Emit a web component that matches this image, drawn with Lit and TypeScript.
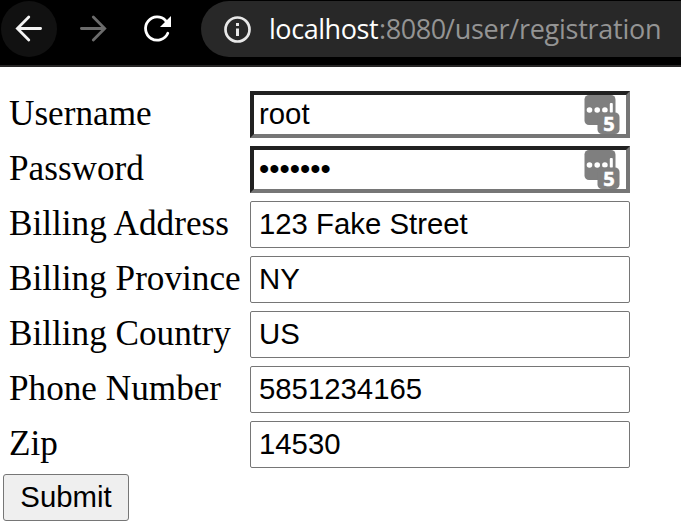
import { LitElement, html, css, svg, nothing } from "lit";
import { customElement } from "lit/decorators.js";
import { classMap } from "lit/directives/class-map.js";

interface Field {
  label: string;
  value: string;
  managed?: boolean;
}

const FIELDS: Field[] = [
  { label: "Username", value: "root", managed: true },
  { label: "Password", value: "•••••••", managed: true },
  { label: "Billing Address", value: "123 Fake Street" },
  { label: "Billing Province", value: "NY" },
  { label: "Billing Country", value: "US" },
  { label: "Phone Number", value: "5851234165" },
  { label: "Zip", value: "14530" },
];

@customElement("browser-bar")
export class BrowserBar extends LitElement {
  static styles = css`
    :host {
      display: flex;
      box-sizing: border-box;
      height: 67px;
      padding-top: 1px;
      background: #000;
      border-bottom: 2px solid #272626;
      overflow: hidden;
    }
    .nav {
      flex: none;
      display: flex;
      width: 201px;
      height: 56px;
      padding-left: 1px;
      box-sizing: border-box;
    }
    .btn {
      flex: none;
      width: 56px;
      height: 56px;
      margin-right: 8px;
      border-radius: 50%;
    }
    .active {
      background: #111;
    }
    svg {
      display: block;
      flex: none;
    }
    .omnibox {
      flex: 1;
      height: 56px;
      border-radius: 28px 0 0 28px;
      background: #282828;
      display: flex;
      align-items: center;
      white-space: nowrap;
      font: 27px/56px "Open Sans", "Noto Sans", sans-serif;
      color: #949494;
    }
    .info {
      margin: 0 16px 0 22px;
    }
    .host {
      color: #fff;
      width: 110px;
      letter-spacing: -0.45px;
    }
    .port {
      width: 66px;
      letter-spacing: -0.4px;
    }
    .path {
      letter-spacing: -0.25px;
    }
  `;

  render() {
    return html`
      <div class="nav">
        <div class="btn active">
          <svg width="56" height="56" fill="none" stroke="#f4f4f4" stroke-width="2.8" stroke-linecap="round">
            <path d="M39.6 27.5H17M27.8 16L16.4 27.5L27.8 39" />
          </svg>
        </div>
        <div class="btn">
          <svg width="56" height="56" fill="none" stroke="#6b6b6b" stroke-width="2.8" stroke-linecap="round">
            <path d="M16.4 27.5H39M28.3 16L39.7 27.5L28.3 39" />
          </svg>
        </div>
        <div class="btn">
          <svg width="56" height="56">
            <path d="M36.7 19.7A11.6 11.6 0 1 0 38.8 32.2" fill="none" stroke="#fff" stroke-width="2.8" stroke-linecap="round" />
            <path d="M42 15V26H31Z" fill="#fff" />
          </svg>
        </div>
      </div>
      <div class="omnibox">
        <svg class="info" width="30" height="30">
          <circle cx="14.5" cy="15.5" r="12" fill="none" stroke="#e8e8e8" stroke-width="2.7" />
          <path d="M13 9h3v3h-3zM13 14.5h3V22h-3z" fill="#e8e8e8" />
        </svg>
        <span class="host">localhost</span><span class="port">:8080</span><span class="path">/user/registration</span>
      </div>
    `;
  }
}

@customElement("app-root")
export class AppRoot extends LitElement {
  static styles = css`
    :host {
      display: block;
      height: 532px;
      background: #fff;
      overflow: hidden;
      color: #000;
    }
    .form {
      display: grid;
      grid-template-columns: 241px 380px;
      grid-auto-rows: 47px;
      row-gap: 8px;
      padding: 24px 0 0 9px;
    }
    .label {
      font: 35.2px/45px "Liberation Serif", serif;
      white-space: nowrap;
    }
    .field {
      position: relative;
      box-sizing: border-box;
      height: 47px;
      padding: 0 8px;
      border: 1px solid #767676;
      border-radius: 2px;
      font: 29.33px/43px "Liberation Sans", sans-serif;
      white-space: nowrap;
    }
    .managed {
      padding: 0 5px;
      border: 4px solid;
      border-color: #212121 #767676 #767676 #212121;
      border-radius: 0;
      line-height: 37px;
    }
    .badge {
      position: absolute;
      right: 6.5px;
      top: 0;
      overflow: visible;
    }
    .digit {
      font: 700 20px "Open Sans", sans-serif;
    }
    .submit {
      display: block;
      box-sizing: border-box;
      width: 126px;
      height: 47px;
      margin: 6px 0 0 3px;
      padding: 0 0 2px;
      border: 1px solid #767676;
      border-radius: 3px;
      background: #efefef;
      color: #000;
      font: 29.33px/43px "Liberation Sans", sans-serif;
    }
  `;

  private badge() {
    return html`<svg class="badge" width="36" height="39">
      ${svg`
        <rect x="0.5" y="0" width="31" height="30" rx="4.5" fill="#7f7f7f" />
        <circle cx="5.5" cy="15" r="2.8" fill="#fff" />
        <circle cx="13.2" cy="15" r="2.8" fill="#fff" />
        <circle cx="20.9" cy="15" r="2.8" fill="#fff" />
        <rect x="25.8" y="8" width="3" height="10" rx="1" fill="#fff" />
        <rect x="13.5" y="17.5" width="22" height="21.5" rx="4.5" fill="#7f7f7f" />
        <text class="digit" x="25" y="35.5" text-anchor="middle" fill="#fff" stroke="#fff" stroke-width="0.5">5</text>
      `}
    </svg>`;
  }

  render() {
    return html`
      <browser-bar></browser-bar>
      <div class="form">
        ${FIELDS.map(
          (f) => html`
            <div class="label">${f.label}</div>
            <div class=${classMap({ field: true, managed: !!f.managed })}>
              ${f.value}${f.managed ? this.badge() : nothing}
            </div>
          `
        )}
      </div>
      <button class="submit">Submit</button>
    `;
  }
}
